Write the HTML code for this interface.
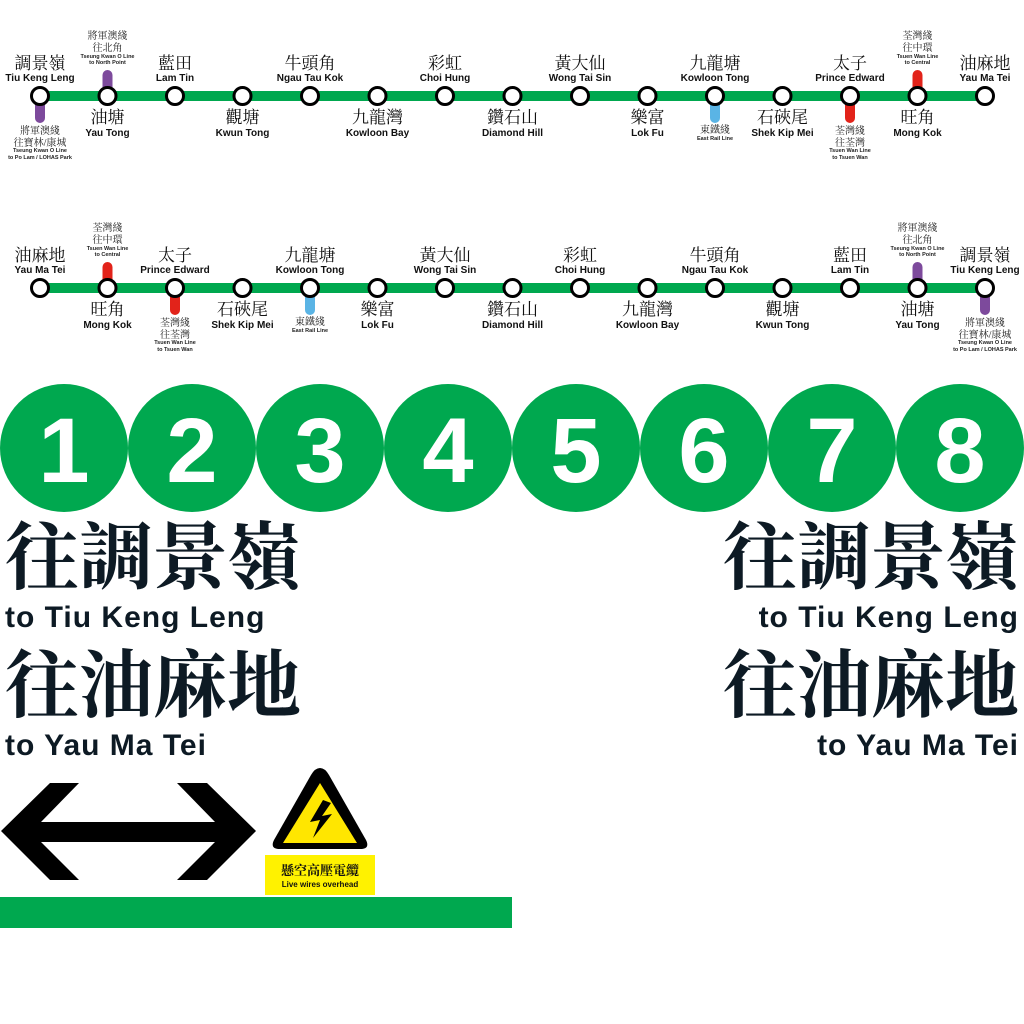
<!DOCTYPE html>
<html><head><meta charset="utf-8"><style>
html,body{margin:0;padding:0;background:#fff;width:1024px;height:1024px;overflow:hidden}
svg{display:block}
.zh{font-family:"Liberation Serif","Noto Serif CJK SC",serif;font-size:17px;fill:#111;text-anchor:middle}
.en{font-family:"Liberation Sans","Noto Sans CJK SC",sans-serif;font-weight:bold;font-size:10px;fill:#111;text-anchor:middle}
.sz{font-family:"Liberation Serif","Noto Serif CJK SC",serif;font-size:10px;fill:#222;text-anchor:middle}
.se{font-family:"Liberation Sans",sans-serif;font-weight:bold;font-size:5.5px;fill:#222;text-anchor:middle}
.num{font-family:"Liberation Sans",sans-serif;font-weight:bold;font-size:92px;fill:#fff;text-anchor:middle}
.bz{font-family:"Liberation Serif","Noto Serif CJK SC",serif;font-weight:bold;font-size:74px;fill:#0d1a24}
.be{font-family:"Liberation Sans",sans-serif;font-weight:bold;font-size:30px;fill:#0d1a24;letter-spacing:1px}
</style></head><body>
<svg width="1024" height="1024" viewBox="0 0 1024 1024" xmlns="http://www.w3.org/2000/svg">
<g fill="none" stroke="#00a84f" stroke-width="10">
<line x1="40" y1="96" x2="985" y2="96"/><line x1="40" y1="288" x2="985" y2="288"/>
</g>
<rect x="35" y="96" width="10" height="27" rx="5" fill="#7d4a9c"/>
<rect x="102.5" y="70" width="10" height="26" rx="5" fill="#7d4a9c"/>
<rect x="710" y="96" width="10" height="27" rx="5" fill="#5ab4e5"/>
<rect x="845" y="96" width="10" height="27" rx="5" fill="#e2231a"/>
<rect x="912.5" y="70" width="10" height="26" rx="5" fill="#e2231a"/>
<rect x="102.5" y="262" width="10" height="26" rx="5" fill="#e2231a"/>
<rect x="170" y="288" width="10" height="27" rx="5" fill="#e2231a"/>
<rect x="305" y="288" width="10" height="27" rx="5" fill="#5ab4e5"/>
<rect x="912.5" y="262" width="10" height="26" rx="5" fill="#7d4a9c"/>
<rect x="980" y="288" width="10" height="27" rx="5" fill="#7d4a9c"/>
<g fill="#fff" stroke="#000" stroke-width="3">
<circle cx="40" cy="96" r="8.5"/><circle cx="107.5" cy="96" r="8.5"/><circle cx="175" cy="96" r="8.5"/><circle cx="242.5" cy="96" r="8.5"/><circle cx="310" cy="96" r="8.5"/><circle cx="377.5" cy="96" r="8.5"/><circle cx="445" cy="96" r="8.5"/><circle cx="512.5" cy="96" r="8.5"/><circle cx="580" cy="96" r="8.5"/><circle cx="647.5" cy="96" r="8.5"/><circle cx="715" cy="96" r="8.5"/><circle cx="782.5" cy="96" r="8.5"/><circle cx="850" cy="96" r="8.5"/><circle cx="917.5" cy="96" r="8.5"/><circle cx="985" cy="96" r="8.5"/>
<circle cx="40" cy="288" r="8.5"/><circle cx="107.5" cy="288" r="8.5"/><circle cx="175" cy="288" r="8.5"/><circle cx="242.5" cy="288" r="8.5"/><circle cx="310" cy="288" r="8.5"/><circle cx="377.5" cy="288" r="8.5"/><circle cx="445" cy="288" r="8.5"/><circle cx="512.5" cy="288" r="8.5"/><circle cx="580" cy="288" r="8.5"/><circle cx="647.5" cy="288" r="8.5"/><circle cx="715" cy="288" r="8.5"/><circle cx="782.5" cy="288" r="8.5"/><circle cx="850" cy="288" r="8.5"/><circle cx="917.5" cy="288" r="8.5"/><circle cx="985" cy="288" r="8.5"/>
</g>
<text class="zh" x="40" y="69">調景嶺</text><text class="en" x="40" y="81">Tiu Keng Leng</text>
<text class="zh" x="175" y="69">藍田</text><text class="en" x="175" y="81">Lam Tin</text>
<text class="zh" x="310" y="69">牛頭角</text><text class="en" x="310" y="81">Ngau Tau Kok</text>
<text class="zh" x="445" y="69">彩虹</text><text class="en" x="445" y="81">Choi Hung</text>
<text class="zh" x="580" y="69">黃大仙</text><text class="en" x="580" y="81">Wong Tai Sin</text>
<text class="zh" x="715" y="69">九龍塘</text><text class="en" x="715" y="81">Kowloon Tong</text>
<text class="zh" x="850" y="69">太子</text><text class="en" x="850" y="81">Prince Edward</text>
<text class="zh" x="985" y="69">油麻地</text><text class="en" x="985" y="81">Yau Ma Tei</text>
<text class="zh" x="107.5" y="123">油塘</text><text class="en" x="107.5" y="136">Yau Tong</text>
<text class="zh" x="242.5" y="123">觀塘</text><text class="en" x="242.5" y="136">Kwun Tong</text>
<text class="zh" x="377.5" y="123">九龍灣</text><text class="en" x="377.5" y="136">Kowloon Bay</text>
<text class="zh" x="512.5" y="123">鑽石山</text><text class="en" x="512.5" y="136">Diamond Hill</text>
<text class="zh" x="647.5" y="123">樂富</text><text class="en" x="647.5" y="136">Lok Fu</text>
<text class="zh" x="782.5" y="123">石硤尾</text><text class="en" x="782.5" y="136">Shek Kip Mei</text>
<text class="zh" x="917.5" y="123">旺角</text><text class="en" x="917.5" y="136">Mong Kok</text>
<text class="sz" x="40" y="134">將軍澳綫</text><text class="sz" x="40" y="146">往寶林/康城</text><text class="se" x="40" y="152">Tseung Kwan O Line</text><text class="se" x="40" y="159">to Po Lam / LOHAS Park</text>
<text class="sz" x="107.5" y="39">將軍澳綫</text><text class="sz" x="107.5" y="51">往北角</text><text class="se" x="107.5" y="58">Tseung Kwan O Line</text><text class="se" x="107.5" y="64">to North Point</text>
<text class="sz" x="715" y="133">東鐵綫</text><text class="se" x="715" y="140">East Rail Line</text>
<text class="sz" x="850" y="134">荃灣綫</text><text class="sz" x="850" y="146">往荃灣</text><text class="se" x="850" y="152">Tsuen Wan Line</text><text class="se" x="850" y="159">to Tsuen Wan</text>
<text class="sz" x="917.5" y="39">荃灣綫</text><text class="sz" x="917.5" y="51">往中環</text><text class="se" x="917.5" y="58">Tsuen Wan Line</text><text class="se" x="917.5" y="64">to Central</text>
<text class="zh" x="40" y="261">油麻地</text><text class="en" x="40" y="273">Yau Ma Tei</text>
<text class="zh" x="175" y="261">太子</text><text class="en" x="175" y="273">Prince Edward</text>
<text class="zh" x="310" y="261">九龍塘</text><text class="en" x="310" y="273">Kowloon Tong</text>
<text class="zh" x="445" y="261">黃大仙</text><text class="en" x="445" y="273">Wong Tai Sin</text>
<text class="zh" x="580" y="261">彩虹</text><text class="en" x="580" y="273">Choi Hung</text>
<text class="zh" x="715" y="261">牛頭角</text><text class="en" x="715" y="273">Ngau Tau Kok</text>
<text class="zh" x="850" y="261">藍田</text><text class="en" x="850" y="273">Lam Tin</text>
<text class="zh" x="985" y="261">調景嶺</text><text class="en" x="985" y="273">Tiu Keng Leng</text>
<text class="zh" x="107.5" y="315">旺角</text><text class="en" x="107.5" y="328">Mong Kok</text>
<text class="zh" x="242.5" y="315">石硤尾</text><text class="en" x="242.5" y="328">Shek Kip Mei</text>
<text class="zh" x="377.5" y="315">樂富</text><text class="en" x="377.5" y="328">Lok Fu</text>
<text class="zh" x="512.5" y="315">鑽石山</text><text class="en" x="512.5" y="328">Diamond Hill</text>
<text class="zh" x="647.5" y="315">九龍灣</text><text class="en" x="647.5" y="328">Kowloon Bay</text>
<text class="zh" x="782.5" y="315">觀塘</text><text class="en" x="782.5" y="328">Kwun Tong</text>
<text class="zh" x="917.5" y="315">油塘</text><text class="en" x="917.5" y="328">Yau Tong</text>
<text class="sz" x="107.5" y="231">荃灣綫</text><text class="sz" x="107.5" y="243">往中環</text><text class="se" x="107.5" y="250">Tsuen Wan Line</text><text class="se" x="107.5" y="256">to Central</text>
<text class="sz" x="175" y="326">荃灣綫</text><text class="sz" x="175" y="338">往荃灣</text><text class="se" x="175" y="344">Tsuen Wan Line</text><text class="se" x="175" y="351">to Tsuen Wan</text>
<text class="sz" x="310" y="325">東鐵綫</text><text class="se" x="310" y="332">East Rail Line</text>
<text class="sz" x="917.5" y="231">將軍澳綫</text><text class="sz" x="917.5" y="243">往北角</text><text class="se" x="917.5" y="250">Tseung Kwan O Line</text><text class="se" x="917.5" y="256">to North Point</text>
<text class="sz" x="985" y="326">將軍澳綫</text><text class="sz" x="985" y="338">往寶林/康城</text><text class="se" x="985" y="344">Tseung Kwan O Line</text><text class="se" x="985" y="351">to Po Lam / LOHAS Park</text>
<g fill="#00a84f">
<circle cx="64" cy="448" r="64"/><circle cx="192" cy="448" r="64"/><circle cx="320" cy="448" r="64"/><circle cx="448" cy="448" r="64"/><circle cx="576" cy="448" r="64"/><circle cx="704" cy="448" r="64"/><circle cx="832" cy="448" r="64"/><circle cx="960" cy="448" r="64"/>
</g>
<text class="num" x="64" y="482">1</text><text class="num" x="192" y="482">2</text><text class="num" x="320" y="482">3</text><text class="num" x="448" y="482">4</text><text class="num" x="576" y="482">5</text><text class="num" x="704" y="482">6</text><text class="num" x="832" y="482">7</text><text class="num" x="960" y="482">8</text>
<text class="bz" x="5" y="583">往調景嶺</text>
<text class="be" x="5" y="627">to Tiu Keng Leng</text>
<text class="bz" x="5" y="711">往油麻地</text>
<text class="be" x="5" y="755">to Yau Ma Tei</text>
<text class="bz" x="1019" y="583" text-anchor="end">往調景嶺</text>
<text class="be" x="1019" y="627" text-anchor="end">to Tiu Keng Leng</text>
<text class="bz" x="1019" y="711" text-anchor="end">往油麻地</text>
<text class="be" x="1019" y="755" text-anchor="end">to Yau Ma Tei</text>
<polygon fill="#000" points="1,831 50,783 79,783 41,822 215,822 177,783 207,783 256,831 207,880 177,880 215,842 41,842 79,880 50,880"/>
<path d="M320,768 Q325,768 329,775 L366,840 Q370,848 362,849 L278,849 Q270,848 274,840 L311,775 Q315,768 320,768 Z" fill="#000"/>
<path d="M320,783 L357,843 L283,843 Z" fill="#ffe600"/>
<path d="M323,800 L310,822 L320,820 L313,838 L332,814 L322,816 L331,803 Z" fill="#000"/>
<rect x="265" y="855" width="110" height="40" fill="#fff200"/>
<text x="320" y="875" style="font-family:'Liberation Serif','Noto Serif CJK SC',serif;font-size:13px;font-weight:bold;fill:#111;text-anchor:middle">懸空高壓電纜</text>
<text x="320" y="887" style="font-family:'Liberation Sans',sans-serif;font-size:8px;font-weight:bold;fill:#111;text-anchor:middle">Live wires overhead</text>
<rect x="0" y="897" width="512" height="31" fill="#00a84f"/>
</svg>
</body></html>
